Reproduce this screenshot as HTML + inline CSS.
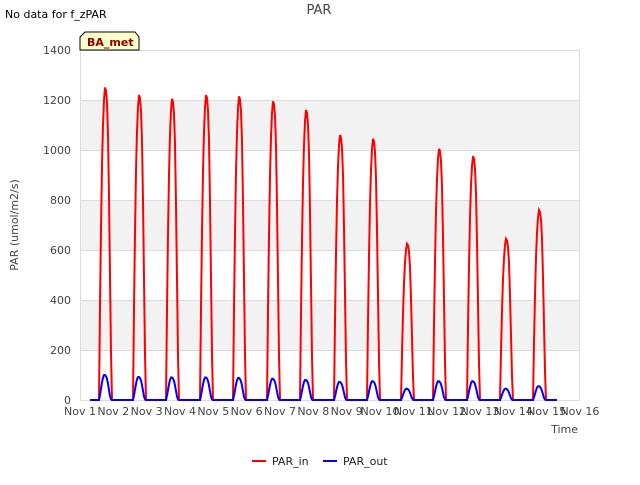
<!DOCTYPE html>
<html><head><meta charset="utf-8"><style>
body{margin:0;background:#fff;width:640px;height:480px;overflow:hidden;font-family:"Liberation Sans",sans-serif}
</style></head><body>
<svg id="s" width="640" height="480" xmlns="http://www.w3.org/2000/svg" font-family="DejaVu Sans, Liberation Sans, sans-serif">
<rect x="80" y="100" width="500" height="50" fill="#f2f2f2"/>
<rect x="80" y="200" width="500" height="50" fill="#f2f2f2"/>
<rect x="80" y="300" width="500" height="50" fill="#f2f2f2"/>
<g stroke="#dcdcdc" stroke-width="1">
<line x1="80" x2="580" y1="50.5" y2="50.5"/><line x1="80" x2="580" y1="100.5" y2="100.5"/>
<line x1="80" x2="580" y1="150.5" y2="150.5"/><line x1="80" x2="580" y1="200.5" y2="200.5"/>
<line x1="80" x2="580" y1="250.5" y2="250.5"/><line x1="80" x2="580" y1="300.5" y2="300.5"/>
<line x1="80" x2="580" y1="350.5" y2="350.5"/><line x1="80" x2="580" y1="400.5" y2="400.5"/>
<line x1="80.5" x2="80.5" y1="50" y2="400"/><line x1="579.5" x2="579.5" y1="50" y2="400"/>
</g>
<g font-size="11" fill="#444" text-anchor="end">
<text x="71" y="54">1400</text><text x="71" y="104">1200</text><text x="71" y="154">1000</text>
<text x="71" y="204">800</text><text x="71" y="254">600</text><text x="71" y="304">400</text>
<text x="71" y="354">200</text><text x="71" y="404">0</text>
</g>
<g id="xt" font-size="11" fill="#444" text-anchor="middle"></g>
<text x="578" y="433" font-size="11" fill="#444" text-anchor="end">Time</text>
<text x="18" y="225" font-size="11" fill="#444" text-anchor="middle" transform="rotate(-90 18 225)">PAR (umol/m2/s)</text>
<text x="319" y="14" font-size="13" fill="#444" text-anchor="middle">PAR</text>
<text x="5" y="18" font-size="11" fill="#000">No data for f_zPAR</text>
<path d="M80,50 L80,37 L85,32 L135,32 L139,37 L139,50 Z" fill="#ffffcc" stroke="#000" stroke-width="1"/>
<text x="87" y="46" font-size="11" font-weight="bold" fill="#8b0000">BA_met</text>
<path id="red" fill="none" stroke="#ff0000" stroke-width="2"/>
<path id="blue" fill="none" stroke="#0000ff" stroke-width="2"/>
<line x1="252" x2="266" y1="461" y2="461" stroke="#ff0000" stroke-width="2"/>
<text x="272" y="465" font-size="11" fill="#222">PAR_in</text>
<line x1="323" x2="337" y1="461" y2="461" stroke="#0000ff" stroke-width="2"/>
<text x="343" y="465" font-size="11" fill="#222">PAR_out</text>
</svg>
<script>
var xt=document.getElementById('xt'),h='';
for(var i=0;i<16;i++){h+='<text x="'+(80+i*33.33)+'" y="415">Nov '+(i+1)+'</text>';}
xt.innerHTML=h;
var pk=[106,140,173,207,240,274,307,341,374,408,440,474,507,540];
var pv=[1250,1220,1205,1220,1215,1195,1160,1060,1045,625,1005,975,645,760];
var bv=[100,92,90,90,88,85,80,72,75,45,75,75,45,55];
var off=[-7,-6,-5,-4,-3,-2,-1,0,1,2,3,4,5,6],fr=[0,0.3,0.55,0.75,0.88,0.96,1,0.99,0.95,0.85,0.65,0.4,0.15,0];
var boff=[-7,-6,-5,-4,-3,-2,-1,0,1,2,3,4,5,6],bfr=[0,0.2,0.45,0.7,0.9,1,1,0.95,0.85,0.65,0.4,0.15,0.03,0];
function Y(v){return 400-v*0.25;}
var r='M90,400',b='M90,400';
for(var d=0;d<14;d++){
 for(var k=0;k<off.length;k++){r+=' L'+(pk[d]+off[k])+','+Y(pv[d]*fr[k]).toFixed(1);}
 for(var k=0;k<boff.length;k++){b+=' L'+(pk[d]+boff[k])+','+Y(bv[d]*bfr[k]).toFixed(1);}
}
r+=' L557,400';b+=' L557,400';
document.getElementById('red').setAttribute('d',r);
document.getElementById('blue').setAttribute('d',b);
</script>
</body></html>
